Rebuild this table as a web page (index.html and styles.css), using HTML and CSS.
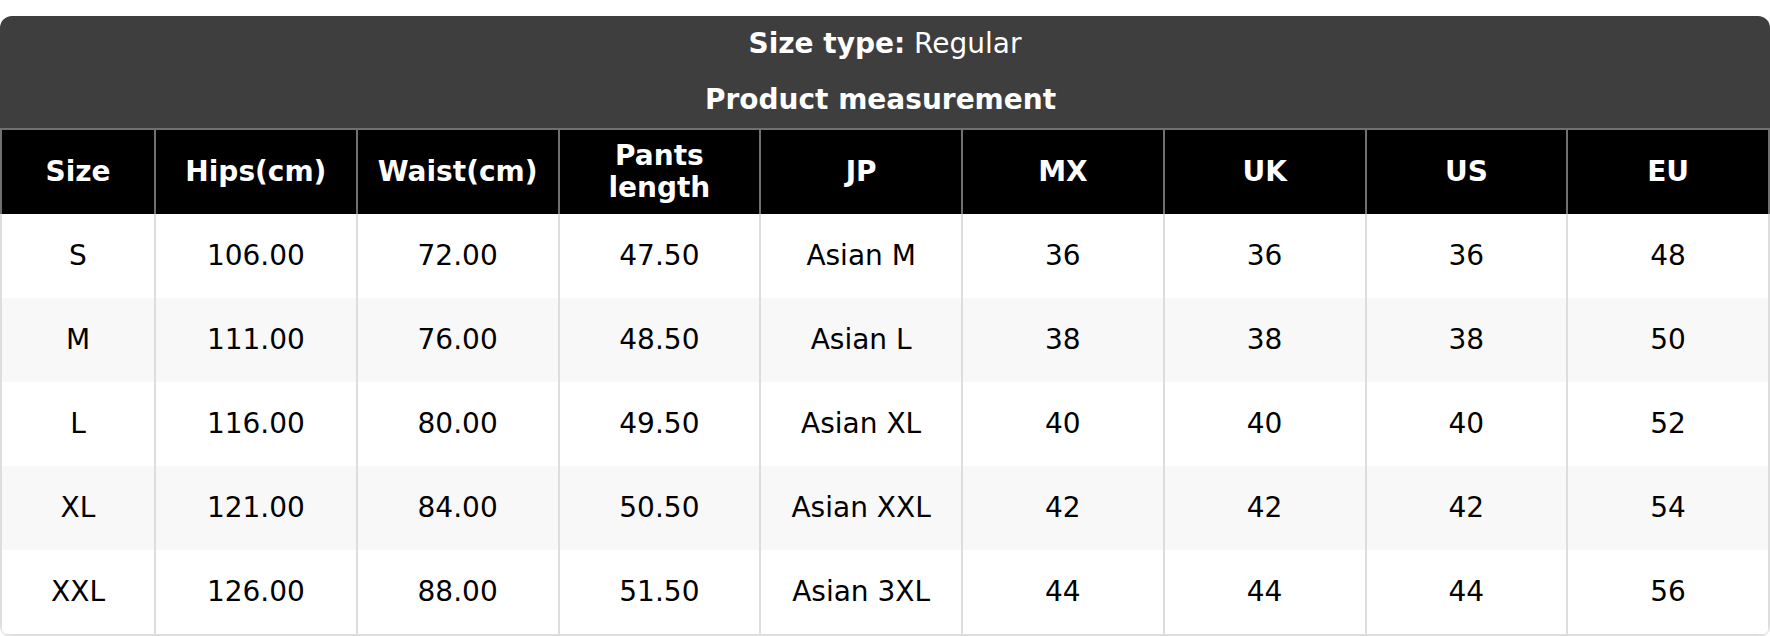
FILE: index.html
```html
<!DOCTYPE html>
<html lang="en">
<head>
<meta charset="utf-8">
<title>Size chart</title>
<link rel="stylesheet" href="styles.css">
</head>
<body>
<div class="card">
  <div class="card-head">
    <div class="size-type"><b>Size type:</b> Regular</div>
    <div class="product-title">Product measurement</div>
  </div>
  <table class="chart">
    <colgroup>
      <col class="col-size">
      <col><col><col><col><col><col><col><col>
    </colgroup>
    <thead>
      <tr>
        <th>Size</th>
        <th>Hips(cm)</th>
        <th>Waist(cm)</th>
        <th>Pants length</th>
        <th>JP</th>
        <th>MX</th>
        <th>UK</th>
        <th>US</th>
        <th>EU</th>
      </tr>
    </thead>
    <tbody>
      <tr><td>S</td><td>106.00</td><td>72.00</td><td>47.50</td><td>Asian M</td><td>36</td><td>36</td><td>36</td><td>48</td></tr>
      <tr><td>M</td><td>111.00</td><td>76.00</td><td>48.50</td><td>Asian L</td><td>38</td><td>38</td><td>38</td><td>50</td></tr>
      <tr><td>L</td><td>116.00</td><td>80.00</td><td>49.50</td><td>Asian XL</td><td>40</td><td>40</td><td>40</td><td>52</td></tr>
      <tr><td>XL</td><td>121.00</td><td>84.00</td><td>50.50</td><td>Asian XXL</td><td>42</td><td>42</td><td>42</td><td>54</td></tr>
      <tr><td>XXL</td><td>126.00</td><td>88.00</td><td>51.50</td><td>Asian 3XL</td><td>44</td><td>44</td><td>44</td><td>56</td></tr>
    </tbody>
  </table>
</div>
</body>
</html>
```

FILE: styles.css
```css
html, body {
  margin: 0;
  padding: 0;
  background: #ffffff;
}

body {
  padding-top: 16px;
  font-family: "DejaVu Sans", Verdana, sans-serif;
  font-size: 28px;
  line-height: 32px;
  color: #000000;
}

.card {
  width: 1770px;
  border-radius: 12px;
  overflow: hidden;
  background: #ffffff;
  box-shadow: 0 1px 2px rgba(0, 0, 0, 0.18);
}

.card-head {
  background: #3e3e3e;
  color: #ffffff;
  text-align: center;
  padding: 12px 0 12px;
  display: flex;
  flex-direction: column;
  gap: 24px;
}

.size-type b {
  font-weight: bold;
}

.product-title {
  font-weight: bold;
  padding-right: 9px;
}

.chart {
  width: 100%;
  border-collapse: collapse;
  table-layout: fixed;
}

.col-size {
  width: 154px;
}

.chart th {
  background: #000000;
  color: #ffffff;
  font-weight: bold;
  text-align: center;
  vertical-align: middle;
  padding: 10px 6px;
  border: 2px solid #707070;
  border-bottom: 0;
}

.chart td {
  text-align: center;
  vertical-align: middle;
  padding: 26px 6px;
  border-left: 2px solid #dddddd;
  border-right: 2px solid #dddddd;
}

.chart tbody tr:nth-child(even) td {
  background: #f8f8f8;
}

.chart tbody tr:last-child td {
  border-bottom: 2px solid #dddddd;
}
```
